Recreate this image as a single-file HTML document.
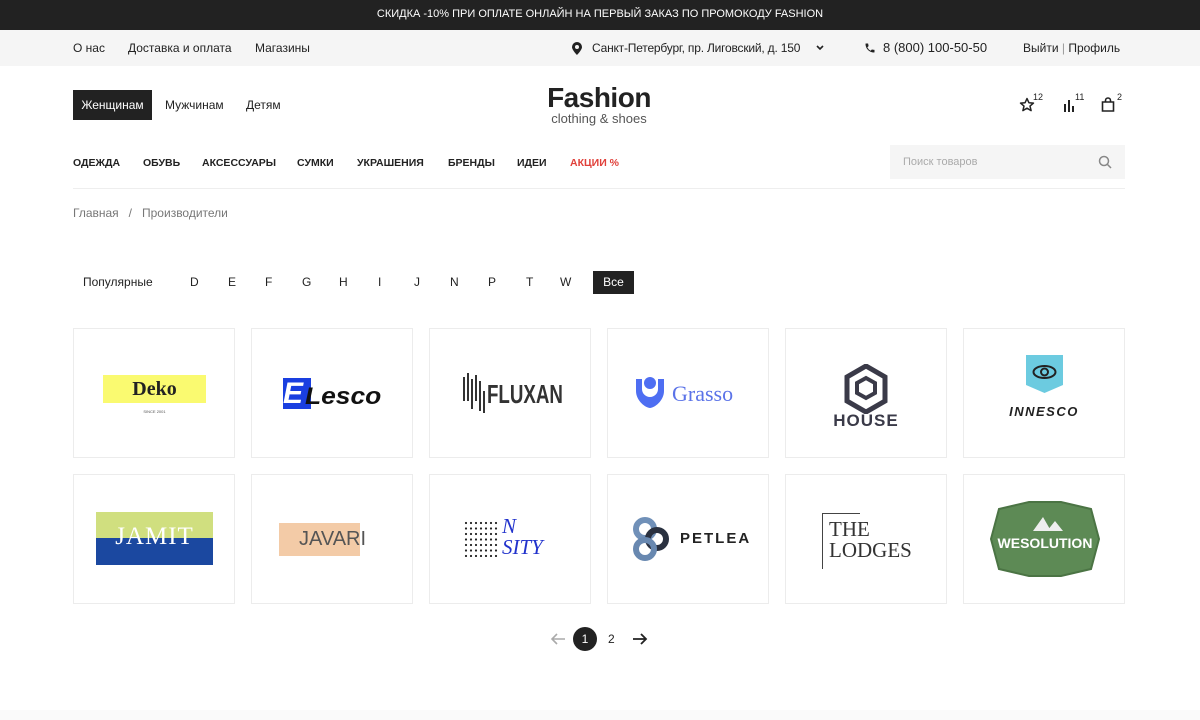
<!DOCTYPE html>
<html><head><meta charset="utf-8"><style>
*{box-sizing:border-box;margin:0;padding:0}
body{width:1200px;height:720px;background:#fff;font-family:"Liberation Sans",sans-serif;color:#222;position:relative;overflow:hidden}
.a{position:absolute;white-space:nowrap}
.card{position:absolute;width:162px;height:130px;border:1px solid #ececec;background:#fff;overflow:hidden}
.card>*{position:absolute}
</style></head><body>
<div class="a" style="left:0;top:0;width:1200px;height:30px;background:#222;color:#fff;font-size:11px;line-height:28px;text-align:center">СКИДКА -10% ПРИ ОПЛАТЕ ОНЛАЙН НА ПЕРВЫЙ ЗАКАЗ ПО ПРОМОКОДУ FASHION</div>
<div class="a" style="left:0;top:30px;width:1200px;height:36px;background:#f5f5f5"></div>
<div class="a" style="left:73px;top:41px;font-size:12px">О нас</div>
<div class="a" style="left:128px;top:41px;font-size:12px">Доставка и оплата</div>
<div class="a" style="left:255px;top:41px;font-size:12px">Магазины</div>
<svg class="a" style="left:572px;top:42px" width="10" height="13" viewBox="0 0 10 13"><path d="M5 0a5 5 0 0 0-5 5c0 3 5 8 5 8s5-5 5-8a5 5 0 0 0-5-5zm0 3a2 2 0 1 1 0 4a2 2 0 0 1 0-4z" fill="#222"/></svg>
<div class="a" style="left:592px;top:41px;font-size:12px;letter-spacing:-0.2px">Санкт-Петербург, пр. Лиговский, д. 150</div>
<svg class="a" style="left:816px;top:45px" width="8" height="6"><path d="M1 1l3 3 3-3" stroke="#222" stroke-width="1.6" fill="none"/></svg>
<svg class="a" style="left:864px;top:42px" width="12" height="12" viewBox="0 0 24 24"><path d="M6.6 10.8a15 15 0 0 0 6.6 6.6l2.2-2.2c.3-.3.7-.4 1-.2 1.1.4 2.3.6 3.6.6.6 0 1 .4 1 1V20c0 .6-.4 1-1 1A17 17 0 0 1 3 4c0-.6.4-1 1-1h3.5c.6 0 1 .4 1 1 0 1.3.2 2.5.6 3.6.1.3 0 .7-.2 1z" fill="#222"/></svg>
<div class="a" style="left:883px;top:40px;font-size:13px">8 (800) 100-50-50</div>
<div class="a" style="left:1023px;top:41px;font-size:12px">Выйти <span style="color:#999">|</span> Профиль</div>
<div class="a" style="left:73px;top:90px;width:79px;height:30px;background:#222;color:#fff;font-size:12px;line-height:30px;text-align:center">Женщинам</div>
<div class="a" style="left:165px;top:98px;font-size:12px">Мужчинам</div>
<div class="a" style="left:246px;top:98px;font-size:12px">Детям</div>
<div class="a" style="left:540px;top:82px;width:118px;text-align:center;font-size:28px;font-weight:bold;line-height:32px;letter-spacing:-0.5px">Fashion</div>
<div class="a" style="left:540px;top:111px;width:118px;text-align:center;font-size:13px;color:#555">clothing &amp; shoes</div>
<svg class="a" style="left:1019px;top:97px" width="16" height="16" viewBox="0 0 16 16"><path d="M8 1.5l1.9 4.2 4.6.4-3.5 3 1.1 4.5L8 11.2l-4.1 2.4L5 9.1l-3.5-3 4.6-.4z" fill="none" stroke="#222" stroke-width="1.5" stroke-linejoin="round"/></svg><div class="a" style="left:1033px;top:92px;font-size:9px">12</div>
<svg class="a" style="left:1063px;top:98px" width="12" height="14"><path d="M2 6v8M6 2v12M10 8v6" stroke="#222" stroke-width="2"/></svg><div class="a" style="left:1075px;top:92px;font-size:9px">11</div>
<svg class="a" style="left:1101px;top:97px" width="14" height="15"><path d="M1.5 5h11v9h-11z" fill="none" stroke="#222" stroke-width="1.6"/><path d="M4.5 5V3.5a2.5 2.5 0 0 1 5 0V5" fill="none" stroke="#222" stroke-width="1.6"/></svg><div class="a" style="left:1117px;top:92px;font-size:9px">2</div>
<div class="a" style="top:157px;font-size:10.5px;font-weight:bold;left:73px">ОДЕЖДА</div>
<div class="a" style="top:157px;font-size:10.5px;font-weight:bold;left:143px">ОБУВЬ</div>
<div class="a" style="top:157px;font-size:10.5px;font-weight:bold;left:202px">АКСЕССУАРЫ</div>
<div class="a" style="top:157px;font-size:10.5px;font-weight:bold;left:297px">СУМКИ</div>
<div class="a" style="top:157px;font-size:10.5px;font-weight:bold;left:357px">УКРАШЕНИЯ</div>
<div class="a" style="top:157px;font-size:10.5px;font-weight:bold;left:448px">БРЕНДЫ</div>
<div class="a" style="top:157px;font-size:10.5px;font-weight:bold;left:517px">ИДЕИ</div>
<div class="a" style="top:157px;font-size:10.5px;font-weight:bold;left:570px;color:#e0403a">АКЦИИ %</div>
<div class="a" style="left:890px;top:145px;width:235px;height:34px;background:#f5f5f5"></div>
<div class="a" style="left:903px;top:156px;font-size:11px;color:#aaa">Поиск товаров</div>
<svg class="a" style="left:1098px;top:155px" width="14" height="14"><circle cx="6" cy="6" r="4.5" fill="none" stroke="#888" stroke-width="1.5"/><path d="M9.5 9.5L13 13" stroke="#888" stroke-width="1.5"/></svg>
<div class="a" style="left:73px;top:188px;width:1052px;height:1px;background:#eee"></div>
<div class="a" style="left:73px;top:206px;font-size:12px;color:#777">Главная &nbsp;&nbsp;/&nbsp;&nbsp; Производители</div>
<div class="a" style="left:83px;top:275px;font-size:12px">Популярные</div>
<div class="a" style="left:190px;top:275px;font-size:12px">D</div>
<div class="a" style="left:228px;top:275px;font-size:12px">E</div>
<div class="a" style="left:265px;top:275px;font-size:12px">F</div>
<div class="a" style="left:302px;top:275px;font-size:12px">G</div>
<div class="a" style="left:339px;top:275px;font-size:12px">H</div>
<div class="a" style="left:378px;top:275px;font-size:12px">I</div>
<div class="a" style="left:414px;top:275px;font-size:12px">J</div>
<div class="a" style="left:450px;top:275px;font-size:12px">N</div>
<div class="a" style="left:488px;top:275px;font-size:12px">P</div>
<div class="a" style="left:526px;top:275px;font-size:12px">T</div>
<div class="a" style="left:560px;top:275px;font-size:12px">W</div>
<div class="a" style="left:593px;top:271px;width:41px;height:23px;background:#222;color:#fff;font-size:12px;line-height:23px;text-align:center">Все</div>

<div class="card" style="left:73px;top:328px"><div style="left:29px;top:46px;width:103px;height:28px;background:#fafa70"></div><div style="left:29px;top:46px;width:103px;text-align:center;font:bold 20px 'Liberation Serif',serif;line-height:28px">Deko</div><div style="left:29px;top:80px;width:103px;text-align:center;font-size:4px;color:#555">SINCE 2001</div></div>
<div class="card" style="left:251px;top:328px"><div style="left:31px;top:49px;width:28px;height:31px;background:#1a3fe0"></div><div style="left:31px;top:50px;font:italic bold 30px 'Liberation Sans',sans-serif;color:#fff;line-height:30px">E</div><div style="left:53px;top:55px;font:italic bold 24px 'Liberation Sans',sans-serif;color:#111;line-height:26px;transform:scaleX(1.1);transform-origin:left">Lesco</div></div>
<div class="card" style="left:429px;top:328px"><svg style="left:31px;top:42px" width="26" height="42"><path d="M3 6v24M7 2v28M11 8v30M15 4v26M19 10v30M23 20v22" stroke="#333" stroke-width="2"/></svg><div style="left:57px;top:50px;font:bold 26px 'Liberation Sans',sans-serif;color:#333;transform:scaleX(.72);transform-origin:left">FLUXAN</div></div>
<div class="card" style="left:607px;top:328px"><svg style="left:26px;top:46px" width="32" height="36"><path d="M2 4h6v10a8 8 0 0 0 16 0V4h6v12c0 10-10 17-14 17S2 26 2 16z" fill="#4e6ef2"/><circle cx="16" cy="8" r="6" fill="#4e6ef2"/></svg><div style="left:64px;top:52px;font:22px 'Liberation Serif',serif;color:#5b73e8">Grasso</div></div>
<div class="card" style="left:785px;top:328px"><svg style="left:58px;top:35px" width="44" height="50" viewBox="0 0 44 50"><path d="M22 2L41 13v24L22 48 3 37V13z" fill="none" stroke="#3a3a48" stroke-width="5"/><path d="M13 19l9-5 9 5v10l-9 5-9-5z" fill="none" stroke="#3a3a48" stroke-width="4"/></svg><div style="left:0;width:160px;top:82px;text-align:center;font:bold 17px 'Liberation Sans',sans-serif;color:#3a3a48;letter-spacing:1px">HOUSE</div></div>
<div class="card" style="left:963px;top:328px"><svg style="left:62px;top:26px" width="37" height="40"><path d="M0 0h37v30l-18.5 8L0 30z" fill="#6ccbe0"/><ellipse cx="18.5" cy="17" rx="11" ry="6" fill="none" stroke="#222" stroke-width="2"/><circle cx="18.5" cy="17" r="3.5" fill="none" stroke="#222" stroke-width="2"/></svg><div style="left:0;width:160px;top:75px;text-align:center;font:italic bold 13px 'Liberation Sans',sans-serif;color:#222;letter-spacing:1.5px">INNESCO</div></div>

<div class="card" style="left:73px;top:474px"><div style="left:22px;top:37px;width:117px;height:28px;background:#d0df7f"></div><div style="left:22px;top:63px;width:117px;height:27px;background:#1b48a0"></div><div style="left:22px;top:48px;width:117px;text-align:center;font:25px 'Liberation Serif',serif;color:#fff;letter-spacing:1px">JAMIT</div></div>
<div class="card" style="left:251px;top:474px"><div style="left:27px;top:48px;width:81px;height:33px;background:#f3cba7"></div><div style="left:47px;top:53px;font:20px 'Liberation Sans',sans-serif;color:#555">JAVARI</div></div>
<div class="card" style="left:429px;top:474px"><svg style="left:34px;top:46px" width="34" height="36"><pattern id="p" width="5" height="5.5" patternUnits="userSpaceOnUse"><circle cx="2" cy="2" r="1.1" fill="#222"/></pattern><rect width="34" height="36" fill="url(#p)"/></svg><div style="left:72px;top:41px;font:italic 21px 'Liberation Serif',serif;color:#2233cc;line-height:21px">N<br>SITY</div></div>
<div class="card" style="left:607px;top:474px"><svg style="left:25px;top:42px" width="38" height="44"><circle cx="12" cy="12" r="9" fill="none" stroke="#7090b8" stroke-width="6"/><circle cx="24" cy="22" r="9" fill="none" stroke="#2a3140" stroke-width="6"/><circle cx="12" cy="32" r="9" fill="none" stroke="#6888b0" stroke-width="6"/></svg><div style="left:72px;top:55px;font:bold 15px 'Liberation Sans',sans-serif;color:#222;letter-spacing:2px">PETLEA</div></div>
<div class="card" style="left:785px;top:474px"><div style="left:36px;top:38px;width:1px;height:56px;background:#444"></div><div style="left:36px;top:38px;width:38px;height:1px;background:#444"></div><div style="left:43px;top:44px;font:21px 'Liberation Serif',serif;color:#333;line-height:21px">THE<br>LODGES</div></div>
<div class="card" style="left:963px;top:474px"><svg style="left:25px;top:26px" width="112" height="76" viewBox="0 0 112 76"><path d="M10 8L40 1h32l30 7 8 30-8 30-30 7H40l-30-7L2 38z" fill="#5d8a55" stroke="#4b7444" stroke-width="2"/><path d="M44 30l10-14 8 14zM58 30l8-10 8 10z" fill="#eee"/><text x="56" y="47" text-anchor="middle" font-family="Liberation Sans" font-weight="bold" font-size="14" fill="#fff">WESOLUTION</text></svg></div>

<svg class="a" style="left:550px;top:632px" width="16" height="14"><path d="M15 7H2M7 2L2 7l5 5" stroke="#aaa" stroke-width="1.6" fill="none"/></svg>
<div class="a" style="left:573px;top:627px;width:24px;height:24px;border-radius:50%;background:#222;color:#fff;font-size:12px;line-height:24px;text-align:center">1</div>
<div class="a" style="left:608px;top:632px;font-size:12px">2</div>
<svg class="a" style="left:632px;top:632px" width="16" height="14"><path d="M1 7h13M9 2l5 5-5 5" stroke="#222" stroke-width="1.8" fill="none"/></svg>
<div class="a" style="left:0;top:710px;width:1200px;height:10px;background:#fafafa"></div>
</body></html>
